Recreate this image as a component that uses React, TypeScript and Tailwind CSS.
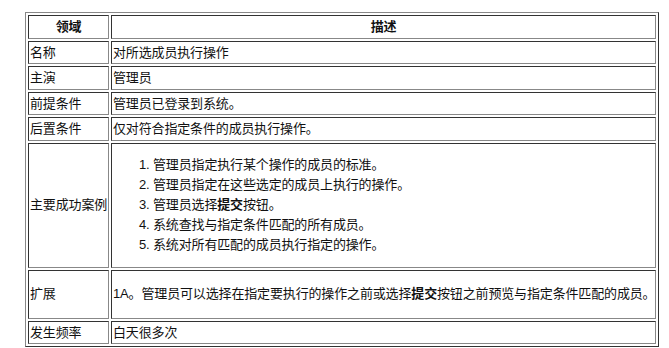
const rows: { label: string; h: string; content: React.ReactNode }[] = [
    { label: "名称", h: "h-[23px]", content: "对所选成员执行操作" },
    { label: "主演", h: "h-[23px]", content: "管理员" },
    { label: "前提条件", h: "h-[23px]", content: "管理员已登录到系统。" },
    { label: "后置条件", h: "h-[23px]", content: "仅对符合指定条件的成员执行操作。" },
    {
        label: "主要成功案例",
        h: "h-[125px]",
        content: (
            <ol className="list-decimal pl-[40px] leading-[20px]">
                <li>管理员指定执行某个操作的成员的标准。</li>
                <li>管理员指定在这些选定的成员上执行的操作。</li>
                <li>
                    管理员选择<b>提交</b>按钮。
                </li>
                <li>系统查找与指定条件匹配的所有成员。</li>
                <li>系统对所有匹配的成员执行指定的操作。</li>
            </ol>
        ),
    },
    {
        label: "扩展",
        h: "h-[49px]",
        content: (
            <>
                1A。管理员可以选择在指定要执行的操作之前或选择<b>提交</b>按钮之前预览与指定条件匹配的成员。
            </>
        ),
    },
    { label: "发生频率", h: "h-[23px]", content: "白天很多次" },
];

const cell = "border border-t-[#333] border-l-[#333] border-b-[#888] border-r-[#888] p-px align-middle whitespace-nowrap";

export default function App() {
    return (
        <div className="bg-white w-[669px] h-[348px] pl-[25px] pt-[12px] font-['Liberation_Sans','Noto_Sans_CJK_SC',sans-serif] text-[13px] tracking-[-0.15px] text-[#111]">
            <table className="w-[634px] border-separate border-spacing-[2px] border border-t-[#888] border-l-[#888] border-b-[#333] border-r-[#333] table-fixed">
                <colgroup>
                    <col className="w-[81px]" />
                    <col className="w-[545px]" />
                </colgroup>
                <tbody>
                    <tr className="h-[23px]">
                        <th className={`${cell} text-center font-bold`}>领域</th>
                        <th className={`${cell} text-center font-bold`}>描述</th>
                    </tr>
                    {rows.map((row) => (
                        <tr key={row.label} className={row.h}>
                            <td className={cell}>{row.label}</td>
                            <td className={cell}>{row.content}</td>
                        </tr>
                    ))}
                </tbody>
            </table>
        </div>
    );
}
